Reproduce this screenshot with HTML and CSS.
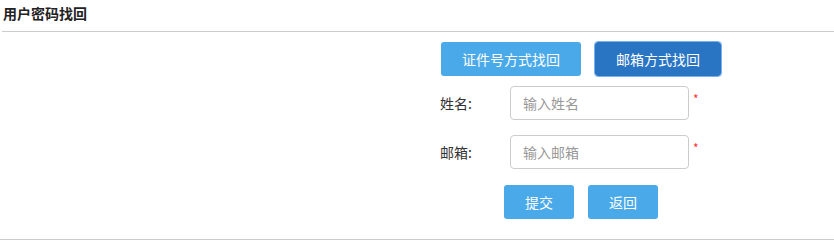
FILE: index.html
```html
<!DOCTYPE html>
<html lang="zh">
<head>
<meta charset="utf-8">
<title>用户密码找回</title>
<link rel="stylesheet" href="styles.css">
</head>
<body>
<div class="page">
  <div class="title">用户密码找回</div>
  <div class="form">
    <div class="tabs">
      <button class="btn">证件号方式找回</button>
      <button class="btn active">邮箱方式找回</button>
    </div>
    <div class="row first">
      <label class="label">姓名:</label>
      <input class="input" type="text" placeholder="输入姓名">
      <span class="star">*</span>
    </div>
    <div class="row">
      <label class="label">邮箱:</label>
      <input class="input" type="text" placeholder="输入邮箱">
      <span class="star">*</span>
    </div>
    <div class="actions">
      <button class="btn">提交</button>
      <button class="btn">返回</button>
    </div>
  </div>
  <div class="footer"></div>
</div>
</body>
</html>
```
FILE: styles.css
```css
* { box-sizing: border-box; }
html, body { margin: 0; padding: 0; background: #fff; }
body {
  font-family: "Noto Sans CJK SC", "Liberation Sans", sans-serif;
  font-size: 14px;
  color: #333;
}
.page { width: 834px; }
.title {
  margin-left: 2px;
  padding-left: 1px;
  height: 32px;
  line-height: 26px;
  font-size: 14px;
  font-weight: bold;
  color: #222;
  border-bottom: 1px solid #ccc;
}
.form {
  margin-left: 440px;
  width: 300px;
}
.tabs {
  display: flex;
  gap: 14px;
  margin-top: 10px;
  padding-left: 1px;
}
.btn {
  height: 34px;
  padding: 0 21px;
  border: none;
  border-radius: 3px;
  background: #4aa9e9;
  color: #fff;
  font-family: inherit;
  font-size: 14px;
  line-height: 34px;
  cursor: pointer;
}
.btn.active {
  background: #2a74c4;
  outline: 1px solid #79b0f2;
}
.row {
  display: flex;
  align-items: center;
  margin-top: 15px;
  height: 34px;
}
.row.first { margin-top: 10px; }
.label {
  width: 70px;
  font-size: 14px;
  color: #333;
}
.input {
  width: 179px;
  height: 34px;
  border: 1px solid #ccc;
  border-radius: 4px;
  padding: 0 12px;
  font-family: inherit;
  font-size: 14px;
  color: #333;
  outline: none;
}
.input::placeholder { color: #999; }
.star {
  align-self: flex-start;
  margin-left: 4px;
  margin-top: 7px;
  font-size: 12px;
  line-height: 12px;
  color: #f33;
}
.actions {
  display: flex;
  gap: 14px;
  margin-top: 16px;
  margin-left: 64px;
}
.footer {
  margin-top: 20px;
  border-top: 1px solid #ccc;
  height: 2px;
  background: #eee;
}
```
